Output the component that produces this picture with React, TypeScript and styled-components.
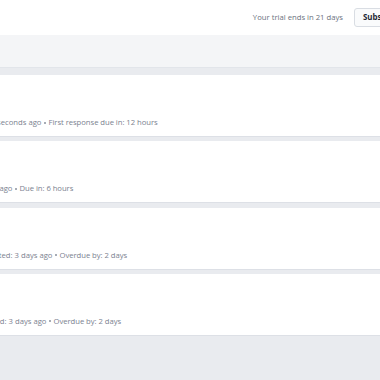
import React from "react";
import styled, { createGlobalStyle } from "styled-components";

const GlobalStyle = createGlobalStyle`
  html, body {
    margin: 0;
    padding: 0;
    background: #e9ebef;
    overflow: hidden;
  }

  body {
    font-family: "Open Sans", "Noto Sans", sans-serif;
  }
`;

// the list is wider than the window; its left part lies off screen
const LEFT_OVERFLOW = 300;

const Page = styled.div`
  width: 380px;
  min-height: 380px;
  display: flex;
  flex-direction: column;
`;

const TopBar = styled.header`
  height: 35px;
  box-sizing: border-box;
  padding-bottom: 1px;
  background: #ffffff;
  display: flex;
  align-items: center;
  justify-content: flex-end;
  gap: 11px;
`;

const TrialNote = styled.span`
  font-size: 7.7px;
  color: #6b7280;
`;

const SubscribeButton = styled.button`
  flex-shrink: 0;
  width: 66px;
  height: 19px;
  margin-right: -40px;
  padding: 0 8px;
  text-align: left;
  border: 1px solid #d9dde3;
  border-radius: 3px;
  background: #fafbfc;
  font-family: inherit;
  font-size: 7.9px;
  font-weight: 700;
  color: #1f2937;
`;

const FilterBar = styled.div`
  height: 32px;
  background: #f4f5f7;
  border-bottom: 1px solid #e2e5ea;
  margin-bottom: 7px;
`;

const TicketList = styled.div`
  display: flex;
  flex-direction: column;
`;

const Ticket = styled.div`
  height: 62px;
  box-sizing: border-box;
  background: #ffffff;
  border-bottom: 1px solid #dde0e6;
  margin-bottom: 4.33px;
  padding-bottom: 8px;
  display: flex;
  flex-direction: column;
  justify-content: flex-end;
  overflow: hidden;
`;

const Body = styled.div`
  margin-left: -${LEFT_OVERFLOW}px;
  display: flex;
  flex-direction: column;
  gap: 12px;
`;

const Subject = styled.div`
  font-size: 9px;
  font-weight: 600;
  color: #1f2937;
  white-space: nowrap;
`;

const Meta = styled.div`
  font-size: 7.7px;
  line-height: 12px;
  color: #7b8290;
  white-space: nowrap;
  display: flex;
  align-items: center;
`;

const Created = styled.span<{ $dot: number }>`
  flex-shrink: 0;
  width: ${(p) => LEFT_OVERFLOW + p.$dot - 3.5}px;
  text-align: right;
`;

const Dot = styled.span`
  flex-shrink: 0;
  width: 2px;
  height: 2px;
  margin: 1px 2.5px 0;
  border-radius: 50%;
  background: #8a909c;
`;

const Due = styled.span`
  letter-spacing: -0.05px;
`;

interface TicketItem {
  id: number;
  subject: string;
  created: string;
  due: string;
  dot: number;
}

const tickets: TicketItem[] = [
  { id: 1, subject: "Login issue", created: "Created: a few seconds ago", due: "First response due in: 12 hours", dot: 45 },
  { id: 2, subject: "Refund", created: "Created: 5 hours ago", due: "Due in: 6 hours", dot: 16 },
  { id: 3, subject: "Billing", created: "Last updated: 3 days ago", due: "Overdue by: 2 days", dot: 56 },
  { id: 4, subject: "Invoice", created: "Created: 3 days ago", due: "Overdue by: 2 days", dot: 50 },
];

const App = () => {
  return (
    <Page>
      <GlobalStyle />
      <TopBar>
        <TrialNote>Your trial ends in 21 days</TrialNote>
        <SubscribeButton>Subscribe</SubscribeButton>
      </TopBar>

      <FilterBar />

      <TicketList>
        {tickets.map((t) => (
          <Ticket key={t.id}>
            <Body>
              <Subject>{t.subject}</Subject>
              <Meta>
                <Created $dot={t.dot}>{t.created}</Created>
                <Dot />
                <Due>{t.due}</Due>
              </Meta>
            </Body>
          </Ticket>
        ))}
      </TicketList>
    </Page>
  );
};

export default App;
